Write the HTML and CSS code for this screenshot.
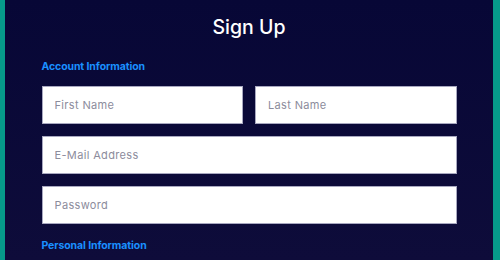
FILE: index.html
```html
<!DOCTYPE html>
<html>
<head>
<meta charset="utf-8">
<link rel="stylesheet" href="styles.css">
</head>
<body>
<div class="frame">
  <form class="form">
    <h1 class="title">Sign Up</h1>
    <h2 class="section">Account Information</h2>
    <div class="row two">
      <input class="field" type="text" placeholder="First Name">
      <input class="field" type="text" placeholder="Last Name">
    </div>
    <div class="row">
      <input class="field" type="email" placeholder="E-Mail Address">
    </div>
    <div class="row">
      <input class="field" type="password" placeholder="Password">
    </div>
    <h2 class="section">Personal Information</h2>
  </form>
</div>
</body>
</html>
```
FILE: styles.css
```css
html, body {
  margin: 0;
  padding: 0;
  height: 100%;
}
body {
  background: #069a8a;
  font-family: Inter, "Noto Sans", sans-serif;
  overflow: hidden;
}
.frame {
  margin: 0 7px 0 5px;
  height: 260px;
  background: linear-gradient(#070736, #0e0c3a);
  display: flex;
  justify-content: center;
}
.form {
  width: 415px;
  display: flex;
  flex-direction: column;
}
.title {
  margin: 14px 0 0;
  font-size: 19.5px;
  line-height: 26px;
  font-weight: 500;
  color: #ffffff;
  text-align: center;
}
.section {
  margin: 20px 0 0;
  font-size: 10.5px;
  line-height: 14px;
  font-weight: 700;
  color: #1a90ff;
  letter-spacing: -0.1px;
}
.section + .row {
  margin-top: 12px;
}
.row {
  display: flex;
  gap: 12px;
  margin-bottom: 12px;
}
.row + .section {
  margin-top: 3px;
}
.field {
  flex: 1;
  min-width: 0;
  height: 38px;
  box-sizing: border-box;
  border: 1px solid #a8a8c0;
  background: #ffffff;
  padding: 0 12px;
  font-family: inherit;
  font-size: 11px;
  letter-spacing: 0.35px;
  color: #333;
  outline: none;
}
.field::placeholder {
  color: #8c8c9c;
}
```
